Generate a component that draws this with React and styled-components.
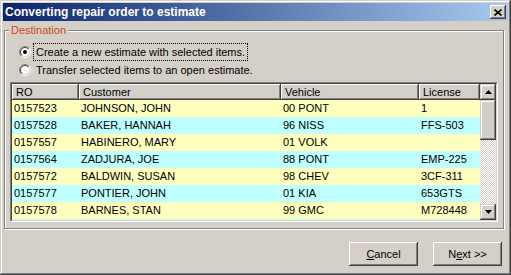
import React from "react";
import styled, { createGlobalStyle } from "styled-components";

const GlobalStyle = createGlobalStyle`
  html, body {
    margin: 0;
    padding: 0;
    background: #d4d0c8;
  }
  body {
    font-family: "Liberation Sans", Arial, sans-serif;
    font-size: 11px;
  }
`;

const COLS = "67px 202px 138px 61px";

const Window = styled.div`
  width: 511px;
  height: 275px;
  box-sizing: border-box;
  padding: 3px;
  background: #d4d0c8;
  box-shadow: inset -1px -1px #404040, inset 1px 1px #d4d0c8,
    inset -2px -2px #808080, inset 2px 2px #fff;
  display: flex;
  flex-direction: column;
  overflow: hidden;
`;

const TitleBar = styled.div`
  height: 18px;
  flex: none;
  display: flex;
  align-items: center;
  justify-content: space-between;
  padding: 0 2px;
  background: linear-gradient(to right, #0a246a, #a6caf0);
  color: #fff;
  font-weight: bold;
  font-size: 12px;
`;

const CloseBtn = styled.button`
  width: 16px;
  height: 14px;
  padding: 0;
  border: none;
  background: #d4d0c8;
  box-shadow: inset -1px -1px #404040, inset 1px 1px #fff,
    inset -2px -2px #808080;
  display: flex;
  align-items: center;
  justify-content: center;
`;

const Group = styled.fieldset`
  margin: 3px 0 0 1px;
  width: 500px;
  box-sizing: border-box;
  padding: 7px 0 6px 5px;
  border: 1px solid #808080;
  box-shadow: inset 1px 1px #fff, 1px 1px #fff;
  min-width: 0;
`;

const Legend = styled.legend`
  margin-left: -1px;
  padding: 0 2px;
  line-height: 13px;
  color: #cc4a14;
  background: #d4d0c8;
`;

const RadioList = styled.div`
  display: flex;
  flex-direction: column;
  gap: 2px;
  margin-left: 9px;
`;

const RadioRow = styled.label`
  display: flex;
  align-items: center;
  height: 16px;
  gap: 3px;
`;

const RadioText = styled.span`
  padding: 0 1px;
  line-height: 14px;
  outline: ${(p) => (p.$focused ? "1px dotted #000" : "none")};
  outline-offset: 0;
  border: 1px solid transparent;
`;

const ListOuter = styled.div`
  margin-top: 4px;
  width: 488px;
  height: 140px;
  box-sizing: border-box;
  border: 1px solid;
  border-color: #808080 #fff #fff #808080;
`;

const ListInner = styled.div`
  height: 100%;
  box-sizing: border-box;
  border: 1px solid;
  border-color: #404040 #d4d0c8 #d4d0c8 #404040;
  display: flex;
  background: #fff;
`;

const Table = styled.div`
  flex: 1;
  overflow: hidden;
`;

const HeaderRow = styled.div`
  display: grid;
  grid-template-columns: ${COLS};
  height: 16px;
`;

const HeaderCell = styled.div`
  background: #d4d0c8;
  box-shadow: inset -1px -1px #404040, inset 1px 1px #fff,
    inset -2px -2px #808080;
  padding-left: 4px;
  line-height: 16px;
  white-space: nowrap;
  overflow: hidden;
`;

const Row = styled.div`
  display: grid;
  grid-template-columns: ${COLS};
  height: 17px;
  background: ${(p) => (p.$alt ? "#c0ffff" : "#ffffc0")};
`;

const Cell = styled.div`
  padding-left: 2px;
  line-height: 17px;
  white-space: nowrap;
  overflow: hidden;
`;

const ScrollBar = styled.div`
  width: 16px;
  flex: none;
  display: flex;
  flex-direction: column;
`;

const ScrollBtn = styled.div`
  height: 16px;
  flex: none;
  background: #d4d0c8;
  box-shadow: inset -1px -1px #404040, inset 1px 1px #d4d0c8,
    inset -2px -2px #808080, inset 2px 2px #fff;
  display: flex;
  align-items: center;
  justify-content: center;
`;

const Thumb = styled(ScrollBtn)`
  height: 40px;
`;

const Track = styled.div`
  flex: 1;
  background: repeating-conic-gradient(#d4d0c8 0 25%, #fff 0 50%) 0 0 / 2px 2px;
`;

const Footer = styled.div`
  display: flex;
  justify-content: flex-end;
  gap: 15px;
  margin-top: 13px;
  padding-right: 6px;
`;

const Button = styled.button`
  width: 69px;
  height: 24px;
  padding: 0;
  border: none;
  background: #d4d0c8;
  box-shadow: inset -1px -1px #404040, inset 1px 1px #fff,
    inset -2px -2px #808080;
  font-family: "Liberation Sans", Arial, sans-serif;
  font-size: 11px;
  color: #000;
`;

const rows = [
  ["0157523", "JOHNSON, JOHN", "00 PONT", "1"],
  ["0157528", "BAKER, HANNAH", "96 NISS", "FFS-503"],
  ["0157557", "HABINERO, MARY", "01 VOLK", ""],
  ["0157564", "ZADJURA, JOE", "88 PONT", "EMP-225"],
  ["0157572", "BALDWIN, SUSAN", "98 CHEV", "3CF-311"],
  ["0157577", "PONTIER, JOHN", "01 KIA", "653GTS"],
  ["0157578", "BARNES, STAN", "99 GMC", "M728448"],
  ["", "", "", ""],
];

function Radio({ checked }) {
  return (
    <svg width="12" height="12" viewBox="0 0 12 12">
      <defs>
        <linearGradient id="ro" x1="0" y1="0" x2="1" y2="1">
          <stop offset="0.5" stopColor="#808080" />
          <stop offset="0.5" stopColor="#fff" />
        </linearGradient>
        <linearGradient id="ri" x1="0" y1="0" x2="1" y2="1">
          <stop offset="0.5" stopColor="#404040" />
          <stop offset="0.5" stopColor="#d4d0c8" />
        </linearGradient>
      </defs>
      <circle cx="6" cy="6" r="5.5" fill="none" stroke="url(#ro)" />
      <circle cx="6" cy="6" r="4.5" fill="#fff" stroke="url(#ri)" />
      {checked && <circle cx="6" cy="6" r="2" fill="#000" />}
    </svg>
  );
}

function Arrow({ down }) {
  return (
    <svg width="7" height="4" viewBox="0 0 7 4">
      <path d={down ? "M0 0h7L3.5 4z" : "M0 4h7L3.5 0z"} fill="#000" />
    </svg>
  );
}

export default function App() {
  return (
    <>
      <GlobalStyle />
      <Window>
        <TitleBar>
          <span>Converting repair order to estimate</span>
          <CloseBtn>
            <svg width="8" height="7" viewBox="0 0 8 7">
              <path d="M0.5 0.5l7 6M7.5 0.5l-7 6" stroke="#000" strokeWidth="1.6" />
            </svg>
          </CloseBtn>
        </TitleBar>
        <Group>
          <Legend>Destination</Legend>
          <RadioList>
            <RadioRow>
              <Radio checked />
              <RadioText $focused>Create a new estimate with selected items.</RadioText>
            </RadioRow>
            <RadioRow>
              <Radio />
              <RadioText>Transfer selected items to an open estimate.</RadioText>
            </RadioRow>
          </RadioList>
          <ListOuter>
            <ListInner>
              <Table>
                <HeaderRow>
                  <HeaderCell>RO</HeaderCell>
                  <HeaderCell>Customer</HeaderCell>
                  <HeaderCell>Vehicle</HeaderCell>
                  <HeaderCell>License</HeaderCell>
                </HeaderRow>
                {rows.map((r, i) => (
                  <Row key={i} $alt={i % 2 === 1}>
                    {r.map((c, j) => (
                      <Cell key={j}>{c}</Cell>
                    ))}
                  </Row>
                ))}
              </Table>
              <ScrollBar>
                <ScrollBtn>
                  <Arrow />
                </ScrollBtn>
                <Thumb />
                <Track />
                <ScrollBtn>
                  <Arrow down />
                </ScrollBtn>
              </ScrollBar>
            </ListInner>
          </ListOuter>
        </Group>
        <Footer>
          <Button>
            <u>C</u>ancel
          </Button>
          <Button>
            N<u>e</u>xt &gt;&gt;
          </Button>
        </Footer>
      </Window>
    </>
  );
}
